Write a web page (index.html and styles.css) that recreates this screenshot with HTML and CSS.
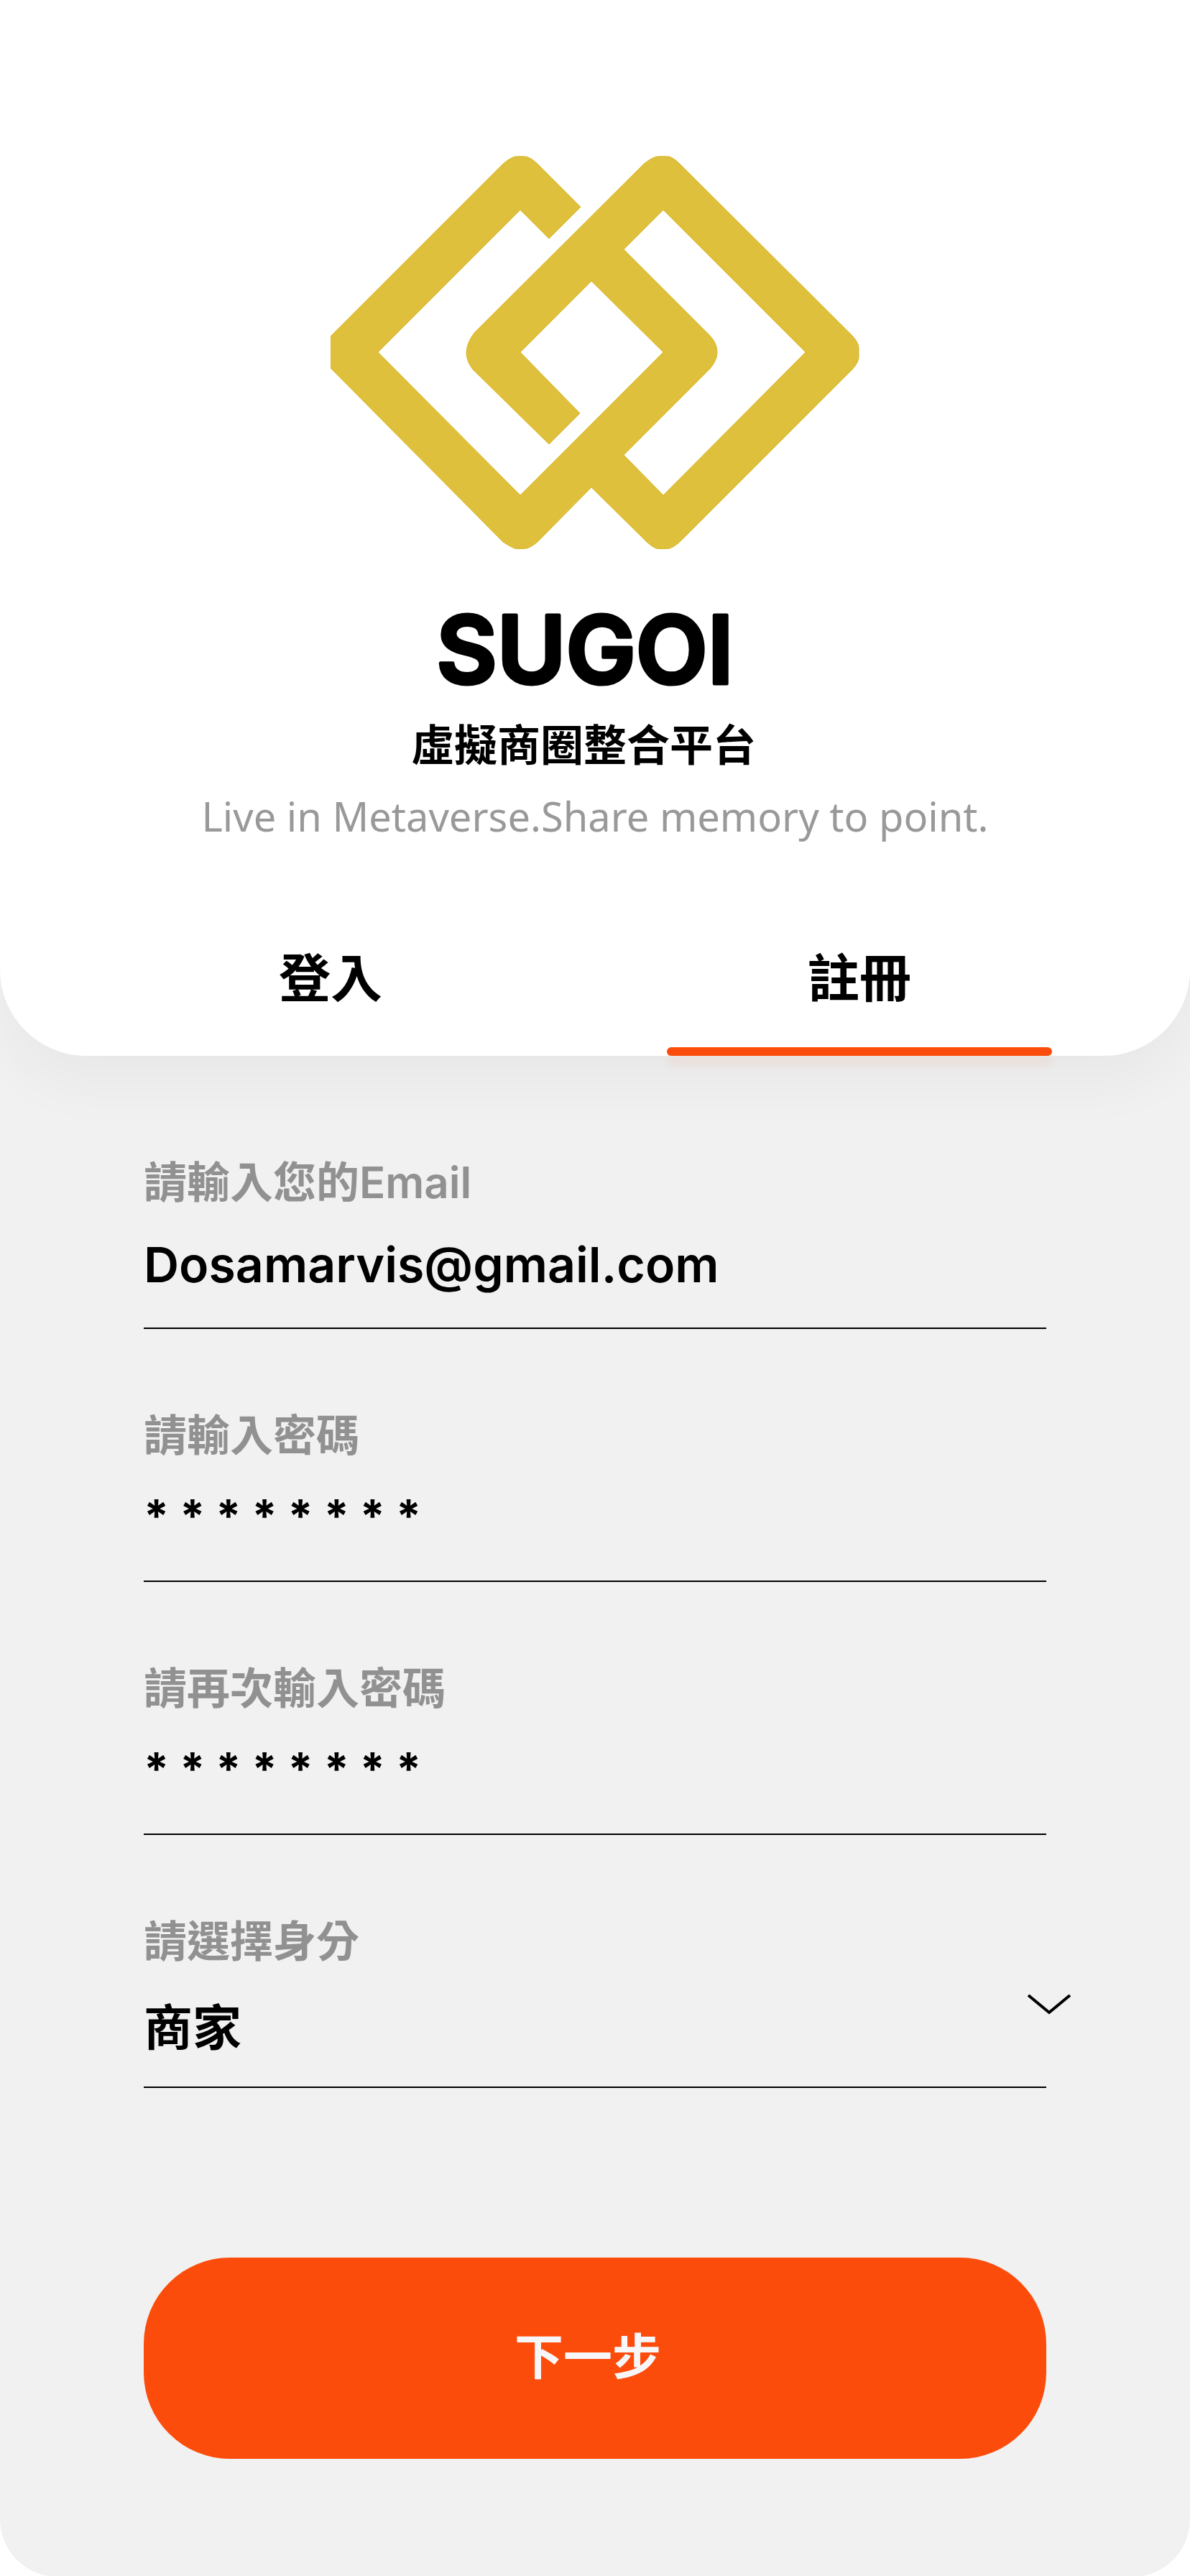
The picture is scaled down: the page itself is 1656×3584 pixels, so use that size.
FILE: index.html
```html
<!DOCTYPE html>
<html lang="zh-Hant">
<head>
<meta charset="utf-8">
<meta name="viewport" content="width=device-width, initial-scale=1">
<title>SUGOI 註冊</title>
<link rel="stylesheet" href="styles.css">
</head>
<body>
<main class="screen">
  <header class="hero">
    <svg class="logo" viewBox="0 0 736 548" role="img" aria-label="SUGOI">
      <path fill="#dec03d" stroke="#dab827" stroke-width="1" fill-rule="evenodd" d="M0 251 L240 11 Q249 3 256 1 Q264 0 273 1 Q280 3 288 11 L348 71 L304 115 L264 75 L66 273 L264 472 L463 273 L363 174 L264 273 L347 358 L304 401 L198 297 Q189 286 189 273 Q190 258 201 245 L436 11 Q446 3 453 1 Q462 0 472 1 Q478 3 486 11 L726 250 Q735 260 735 267 V280 Q735 287 726 297 L486 537 Q478 544 472 546 Q462 547 453 546 Q446 543 440 537 L363 461 L288 537 Q280 544 273 546 Q264 547 256 546 Q249 543 240 537 L0 295 Z M463 75 L661 273 L463 472 L408 416 L527 297 Q538 285 538 273 Q538 260 527 249 L408 130 Z"/>
    </svg>
    <div class="brand">
      <h1 class="brand-name">
        <svg class="wordmark" viewBox="0 0 480 192"><text class="wordmark-text" x="242" y="154">SUGOI</text></svg>
      </h1>
      <p class="brand-sub">虛擬商圈整合平台</p>
    </div>
    <p class="tagline">Live in Metaverse.Share memory to point.</p>
    <nav class="tabs">
      <a class="tab" href="#login">登入</a>
      <a class="tab tab-active" href="#register" aria-current="page">註冊</a>
    </nav>
  </header>
  <form class="form">
    <div class="field">
      <label class="label" for="email">請輸入您的Email</label>
      <input class="control control-email" id="email" type="email" value="Dosamarvis@gmail.com">
    </div>
    <div class="field">
      <label class="label" for="password">請輸入密碼</label>
      <input class="control control-secret" id="password" type="text" value="* * * * * * * *">
    </div>
    <div class="field">
      <label class="label" for="confirm">請再次輸入密碼</label>
      <input class="control control-secret" id="confirm" type="text" value="* * * * * * * *">
    </div>
    <div class="field">
      <label class="label" for="role">請選擇身分</label>
      <select class="control control-role" id="role"><option>商家</option></select>
      <svg class="chevron" viewBox="0 0 60 28" aria-hidden="true"><path d="M1 1 L30 25 L59 1"/></svg>
    </div>
    <button class="submit" type="submit">下一步</button>
  </form>
</main>
</body>
</html>
```

FILE: styles.css
```css
* {
  box-sizing: border-box;
}

body {
  margin: 0;
  background: #fff;
  color: #000;
  font-family: Inter, "Noto Sans CJK TC", sans-serif;
}

.screen {
  background: #f1f1f1;
  border-radius: 0 0 80px 80px;
}

.hero {
  display: flex;
  flex-direction: column;
  align-items: center;
  padding-top: 217px;
  background: #fff;
  border-radius: 0 0 120px 120px;
  box-shadow: 0 40px 80px rgba(0, 0, 0, 0.04);
}

.logo {
  width: 736px;
  height: 548px;
}

.brand {
  display: flex;
  flex-direction: column;
  align-items: center;
  padding: 32px 32px 0 0;
}

.brand-name {
  margin: 0;
}

.wordmark {
  display: block;
  width: 480px;
  height: 192px;
}

.wordmark-text {
  font: 600 130px Inter, sans-serif;
  text-anchor: middle;
  stroke: #000;
  stroke-width: 5px;
  stroke-linejoin: round;
}

.brand-sub {
  margin: 4px 0 0;
  font-size: 60px;
  font-weight: 700;
  line-height: 88px;
}

.tagline {
  margin: 12px 0 0;
  color: #999;
  font-family: "Noto Sans", sans-serif;
  font-size: 56px;
  line-height: 84px;
}

.tabs {
  display: flex;
  align-self: stretch;
  margin-top: 132px;
  padding: 0 92px;
}

.tab {
  display: flex;
  flex: 1;
  flex-direction: column;
  align-items: center;
  color: #000;
  font-size: 72px;
  font-weight: 700;
  line-height: 104px;
  text-decoration: none;
}

.tab::after {
  content: "";
  width: 536px;
  height: 12px;
  margin-top: 44px;
  border-radius: 6px;
}

.tab-active::after {
  background: #fc4c0c;
  box-shadow: 0 12px 12px rgba(252, 76, 12, 0.08);
}

.form {
  display: flex;
  flex-direction: column;
  padding: 132px 200px 164px;
}

.field {
  position: relative;
  display: flex;
  flex-direction: column;
  height: 248px;
  margin-bottom: 104px;
  border-bottom: 2px solid #000;
}

.label {
  color: #919191;
  font-size: 60px;
  font-weight: 600;
  line-height: 88px;
}

.control {
  width: 100%;
  height: 100px;
  margin: 20px 0 0;
  padding: 0;
  border: 0;
  outline: 0;
  appearance: none;
  background: none;
  color: #000;
}

.control-email {
  font: 600 68px/100px Inter, sans-serif;
}

.control-secret {
  padding-bottom: 4px;
  font: 700 63px/96px Inter, sans-serif;
}

.control-role {
  padding-top: 4px;
  font: 700 68px/96px "Noto Sans CJK TC", sans-serif;
}

.chevron {
  position: absolute;
  right: -34px;
  bottom: 100px;
  width: 60px;
  height: 28px;
  fill: none;
  stroke: #000;
  stroke-width: 4px;
  pointer-events: none;
}

.submit {
  height: 280px;
  margin-top: 132px;
  padding: 0 20px 4px 0;
  border: 0;
  border-radius: 120px;
  background: #fc4c0c;
  color: #f7f7fa;
  font: 700 68px/100px Inter, "Noto Sans CJK TC", sans-serif;
}
```
